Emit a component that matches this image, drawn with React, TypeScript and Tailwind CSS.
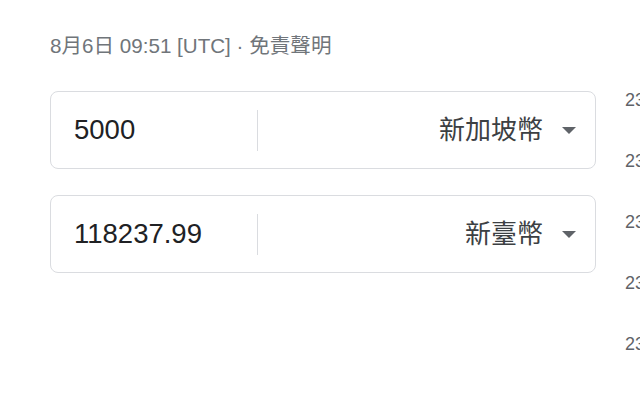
import React from "react";

function Arrow() {
  return (
    <svg width="14" height="7" viewBox="0 0 14 7" className="shrink-0">
      <path d="M0 0 L14 0 L7 7 Z" fill="#5f6368" />
    </svg>
  );
}

function Row({ value, currency }: { value: string; currency: string }) {
  return (
    <div className="h-[78px] border border-[#dadce0] rounded-lg flex items-center bg-white">
      <div className="w-[206px] pl-[23px] text-[27.5px] text-[#202124] leading-none">{value}</div>
      <div className="w-px h-[41px] bg-[#dadce0]" />
      <div className="flex-1 flex items-center justify-end pr-[19px] gap-[19px]">
        <span className="text-[26px] text-[#3c4043] leading-none">{currency}</span>
        <Arrow />
      </div>
    </div>
  );
}

export default function App() {
  const rights = ["23", "23", "23", "23", "23"];
  return (
    <div
      className="w-[640px] h-[400px] overflow-hidden bg-white flex"
      style={{ fontFamily: '"Liberation Sans", Arial, "Noto Sans CJK TC", sans-serif' }}
    >
      <div className="w-[596px] shrink-0 pl-[50px] pt-[35px]">
        <div className="text-[20.6px] leading-[22px] text-[#70757a] whitespace-nowrap">8月6日 09:51 [UTC] · 免責聲明</div>
        <div className="mt-[34px] flex flex-col gap-[26px]">
          <Row value="5000" currency="新加坡幣" />
          <Row value="118237.99" currency="新臺幣" />
        </div>
      </div>
      <div className="pl-[29px] pt-[90px] flex flex-col gap-[40px] shrink-0">
        {rights.map((r, i) => (
          <div key={i} className="text-[18px] leading-[21px] text-[#5f6368] whitespace-nowrap">
            {r}
          </div>
        ))}
      </div>
    </div>
  );
}
